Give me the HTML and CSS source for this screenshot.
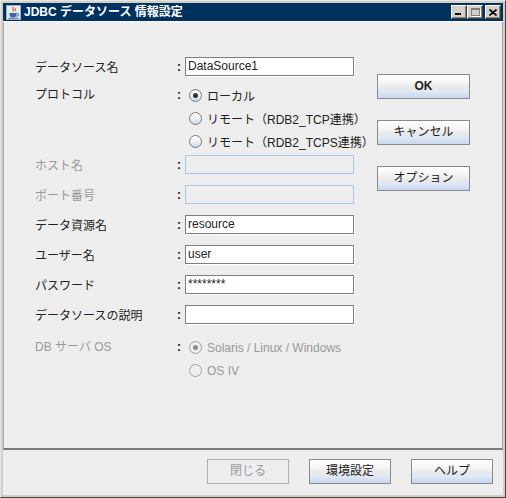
FILE: index.html
```html
<!DOCTYPE html>
<html lang="ja">
<head>
<meta charset="utf-8">
<title>JDBC データソース 情報設定</title>
<link rel="stylesheet" href="styles.css">
</head>
<body>
<div class="window">
  <div class="titlebar">
    <svg class="app-icon" width="15" height="15" viewBox="0 0 15 15">
      <rect x="0.5" y="0.5" width="14" height="14" fill="#e4eaf4" stroke="#9fb0c8"/>
      <path d="M7 1.8 C5.6 3.4 8.6 4.4 7 6.6 M9.3 2.8 C8.3 3.9 10.3 4.7 9.2 6.2" stroke="#e2661a" fill="none" stroke-width="1.2"/>
      <path d="M3.5 8 h7 v1.4 c0 2 -1.5 3 -3.5 3 c-2 0 -3.5 -1 -3.5 -3z" fill="#3f65a3"/>
      <path d="M10.5 8.6 h0.9 a1.2 1.2 0 0 1 0 2.4 h-1.2" stroke="#3f65a3" fill="none"/>
      <path d="M2.5 13.2 h10" stroke="#3f65a3"/>
    </svg>
    <span class="title">JDBC データソース 情報設定</span>
    <div class="wbtns">
      <span class="wbtn min"><span class="min-bar"></span></span>
      <span class="wbtn max"><span class="max-box"></span></span>
      <span class="wbtn close">
        <svg width="8" height="7" viewBox="0 0 8 7"><path d="M0.5 0.5 L7.5 6.5 M7.5 0.5 L0.5 6.5" stroke="#000" stroke-width="1.6"/></svg>
      </span>
    </div>
  </div>
  <div class="content">
    <div class="main">
      <div class="form">
        <div class="row frow first">
          <span class="label">データソース名</span><span class="colon">:</span>
          <div class="field">DataSource1</div>
        </div>
        <div class="row group proto">
          <span class="label glabel">プロトコル</span><span class="colon glabel">:</span>
          <div class="radios">
            <div class="rline"><span class="radio on"></span>ローカル</div>
            <div class="rline"><span class="radio"></span>リモート（RDB2_TCP連携）</div>
            <div class="rline"><span class="radio"></span>リモート（RDB2_TCPS連携）</div>
          </div>
        </div>
        <div class="row frow after-proto">
          <span class="label dis">ホスト名</span><span class="colon">:</span>
          <div class="field disabled"></div>
        </div>
        <div class="row frow">
          <span class="label dis">ポート番号</span><span class="colon">:</span>
          <div class="field disabled"></div>
        </div>
        <div class="row frow">
          <span class="label">データ資源名</span><span class="colon">:</span>
          <div class="field">resource</div>
        </div>
        <div class="row frow">
          <span class="label">ユーザー名</span><span class="colon">:</span>
          <div class="field">user</div>
        </div>
        <div class="row frow">
          <span class="label">パスワード</span><span class="colon">:</span>
          <div class="field pw">********</div>
        </div>
        <div class="row frow">
          <span class="label">データソースの説明</span><span class="colon">:</span>
          <div class="field"></div>
        </div>
        <div class="row group os">
          <span class="label glabel dis">DB サーバ OS</span><span class="colon glabel">:</span>
          <div class="radios">
            <div class="rline dis"><span class="radio on disr"></span>Solaris / Linux / Windows</div>
            <div class="rline dis"><span class="radio disr"></span>OS IV</div>
          </div>
        </div>
      </div>
      <div class="side">
        <button class="btn wide ok">OK</button>
        <button class="btn wide">キャンセル</button>
        <button class="btn wide">オプション</button>
      </div>
    </div>
    <div class="footer">
      <button class="btn small off">閉じる</button>
      <button class="btn small">環境設定</button>
      <button class="btn small">ヘルプ</button>
    </div>
  </div>
</div>
</body>
</html>
```
FILE: styles.css
```css
* { box-sizing: border-box; }
html, body { margin: 0; padding: 0; }
body {
  font-family: "Liberation Sans", "Noto Sans CJK JP", sans-serif;
  font-size: 12px;
  color: #222;
  background: #ffffff;
}
.window {
  width: 506px;
  height: 498px;
  background: #d4d0c8;
  border: 1px solid;
  border-color: #e6e6e6 #404040 #404040 #e6e6e6;
  padding: 2px;
  display: flex;
  flex-direction: column;
}
.titlebar {
  height: 18px;
  flex: none;
  background: #00325f;
  display: flex;
  align-items: center;
  padding: 0 2px 0 3px;
}
.app-icon { display: block; flex: none; }
.title {
  margin-left: 3px;
  color: #fff;
  font-weight: bold;
  font-size: 12px;
  line-height: 18px;
  white-space: nowrap;
}
.wbtns {
  margin-left: auto;
  display: flex;
  align-items: center;
}
.wbtn {
  width: 16px;
  height: 14px;
  background: #d4d0c8;
  border: 1px solid;
  border-color: #ffffff #404040 #404040 #ffffff;
  box-shadow: inset -1px -1px 0 #808080;
  display: flex;
  align-items: center;
  justify-content: center;
}
.wbtn.min { align-items: flex-end; justify-content: flex-start; padding: 0 0 3px 3px; }
.min-bar { width: 6px; height: 2px; background: #000; }
.max-box {
  width: 9px;
  height: 8px;
  border: 1px solid #808080;
  border-top-width: 2px;
  box-shadow: 1px 1px 0 #fff;
}
.wbtn.close { margin-left: 2px; }
.wbtn.close svg { display: block; }

.content {
  flex: 1;
  display: flex;
  flex-direction: column;
  border-top: 1px solid #ffffff;
  background-color: #eeeeee;
  background-image: repeating-conic-gradient(#f0f0f0 0 25%, #ebebeb 0 50%);
  background-size: 2px 2px;
}
.main {
  height: 428px;
  flex: none;
  display: flex;
  align-items: flex-start;
  border-left: 1px solid #a8a8a8;
  border-right: 1px solid #a8a8a8;
  border-bottom: 2px solid #7c7c7c;
  padding: 35px 0 0 31px;
}
.form {
  width: 342px;
  display: flex;
  flex-direction: column;
}
.row {
  display: flex;
  align-items: center;
}
.frow { height: 19px; margin-top: 11px; }
.frow.first { margin-top: 0; }
.frow.after-proto { margin-top: 2px; }
.group { align-items: flex-start; }
.proto { margin-top: 8px; }
.os { margin-top: 12px; }
.label {
  width: 140px;
  flex: none;
  white-space: nowrap;
  color: #222;
}
.glabel { line-height: 23px; }
.label.dis { color: #999; }
.colon {
  width: 10px;
  flex: none;
  padding-left: 2px;
  font-weight: bold;
  color: #111;
}
.field {
  width: 169px;
  height: 19px;
  flex: none;
  border: 1px solid #7e7e7e;
  background: #fff;
  box-shadow: 1px 1px 0 #ffffff;
  padding: 0 2px;
  line-height: 17px;
  color: #222;
  white-space: nowrap;
  overflow: hidden;
}
.field.disabled {
  background: transparent;
  border-color: #a6c8ee;
  box-shadow: none;
}
.field.pw { line-height: 16px; }
.radios { display: flex; flex-direction: column; }
.rline {
  height: 23px;
  display: flex;
  align-items: center;
  padding-left: 4px;
  white-space: nowrap;
  color: #222;
}
.rline.dis { color: #999; }
.radio {
  width: 13px;
  height: 13px;
  flex: none;
  border-radius: 50%;
  margin-right: 5px;
  border: 1px solid #7a7a7a;
  background: linear-gradient(#ffffff 0%, #f2f4f8 45%, #c9d8ec 100%);
  display: flex;
  align-items: center;
  justify-content: center;
}
.radio.on::after {
  content: "";
  width: 5px;
  height: 5px;
  border-radius: 50%;
  background: #333;
}
.radio.disr {
  border-color: #a0a0a0;
  background: #eeeeee;
}
.radio.disr.on::after { background: #8c8c8c; }

.side {
  margin-top: 17px;
  display: flex;
  flex-direction: column;
  gap: 21px;
}
.btn {
  height: 25px;
  padding: 0;
  margin: 0;
  border: 1px solid #8a8a8a;
  background: linear-gradient(#ffffff 0%, #f6f6f6 30%, #e9e9e9 55%, #dfe8f6 72%, #c8d6ee 100%);
  font-family: "Liberation Sans", "Noto Sans CJK JP", sans-serif;
  font-size: 12px;
  color: #222;
  text-align: center;
  line-height: 23px;
}
.btn.wide { width: 93px; }
.btn.ok { font-weight: bold; }
.btn.small { width: 82px; }
.btn.off {
  background: transparent;
  border-color: #b0b0b0;
  color: #9a9a9a;
}
.footer {
  flex: 1;
  display: flex;
  justify-content: flex-end;
  align-items: flex-start;
  gap: 20px;
  padding: 9px 10px 0 0;
}
```
